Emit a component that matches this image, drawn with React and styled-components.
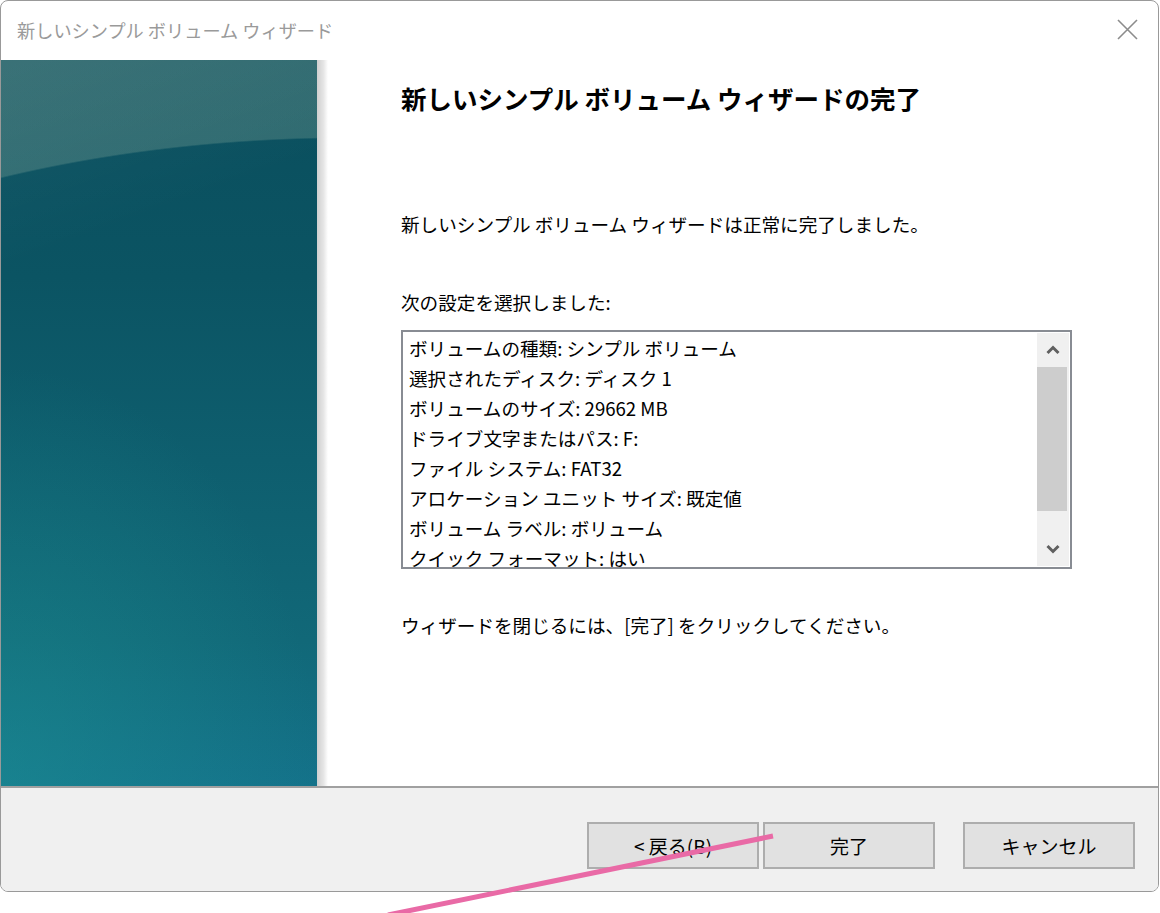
import styled, { createGlobalStyle } from "styled-components";

// style

const GlobalStyle = createGlobalStyle`
html, body {
    margin: 0;
    padding: 0;
    background: #fff;
}
body {
    font-family: "Noto Sans CJK JP", "Noto Sans", sans-serif;
    color: #000;
}
`

const Page = styled.div`
position: relative;
width: 1160px;
height: 913px;
overflow: hidden;
`

const Window = styled.div`
width: 1159px;
height: 892px;
box-sizing: border-box;
border: 1px solid #999;
border-radius: 8px;
background: #fff;
display: flex;
flex-direction: column;
overflow: hidden;
`

const TitleBar = styled.div`
height: 59px;
flex: none;
display: flex;
align-items: center;
justify-content: space-between;
padding: 0 20px 0 16px;
`

const TitleText = styled.span`
font-size: 18.2px;
color: #9a9a9a;
margin-top: -2px;
`

const CloseBtn = styled.div`
width: 22px;
height: 22px;
display: flex;
align-items: center;
justify-content: center;
margin-top: -2px;
`

const Body = styled.div`
flex: 1;
display: flex;
min-height: 0;
`

const SidePanel = styled.div`
width: 316px;
flex: none;
background:
    linear-gradient(160deg, rgba(255, 255, 255, 0.05) 0, rgba(255, 255, 255, 0) 200px),
    radial-gradient(ellipse 800px 396px at 350px 473px, rgba(0, 0, 0, 0) 99.6%, rgba(120, 160, 148, 0.34) 100%),
    radial-gradient(ellipse 320px 420px at 0% 100%, rgba(30, 150, 150, 0.45), rgba(30, 150, 150, 0)),
    linear-gradient(to bottom, #0a4e5d 0%, #0b5463 30%, #0e5e6e 55%, #116878 80%, #14728a 100%);
`

const PanelShadow = styled.div`
width: 11px;
flex: none;
background: linear-gradient(to right, #cfcfcf, #e6e6e6 60%, #fff);
`

const Content = styled.div`
flex: 1;
padding: 20px 86px 0 73px;
display: flex;
flex-direction: column;
`

const Heading = styled.h1`
margin: 0;
font-size: 25.5px;
line-height: 36px;
font-weight: 700;
`

const Text = styled.p`
margin: ${p => p.$top || 0}px 0 0 0;
font-size: 18.6px;
line-height: 28px;
`

const ListBox = styled.div`
margin-top: 14px;
height: 239px;
box-sizing: border-box;
border: 2px solid #888c93;
display: flex;
overflow: hidden;
`

const Lines = styled.ul`
flex: 1;
list-style: none;
margin: 0;
padding: 1px 0 0 6px;
overflow: hidden;
`

const Line = styled.li`
font-size: 18.6px;
line-height: 30px;
white-space: nowrap;
`

const ScrollBar = styled.div`
width: 32px;
margin: 1px 1px 1px 0;
background: #f0f0f0;
display: flex;
flex-direction: column;
`

const ScrollArrow = styled.div`
height: 34px;
flex: none;
display: flex;
align-items: center;
justify-content: center;
`

const Thumb = styled.div`
height: 144px;
margin-right: 2px;
background: #cdcdcd;
`

const ScrollTrack = styled.div`
flex: 1;
`

const Footer = styled.div`
height: 105px;
flex: none;
box-sizing: border-box;
border-top: 2px solid #a0a0a0;
background: #f0f0f0;
display: flex;
justify-content: flex-end;
padding: 34px 23px 0 0;
`

const Button = styled.button`
width: 172px;
height: 47px;
box-sizing: border-box;
border: 2px solid #adadad;
background: #e1e1e1;
font-family: "Noto Sans CJK JP", "Noto Sans", sans-serif;
font-size: 19px;
color: #000;
padding: 0;
margin-left: ${p => p.$gap || 0}px;
`

const Annotation = styled.svg`
position: absolute;
inset: 0;
pointer-events: none;
`

//

const settings = [
    "ボリュームの種類: シンプル ボリューム",
    "選択されたディスク: ディスク 1",
    "ボリュームのサイズ: 29662 MB",
    "ドライブ文字またはパス: F:",
    "ファイル システム: FAT32",
    "アロケーション ユニット サイズ: 既定値",
    "ボリューム ラベル: ボリューム",
    "クイック フォーマット: はい",
]

const Chevron = ({ down }) => (
    <svg width="14" height="10" viewBox="0 0 14 10">
        <path
            d={down ? "M1.5 2 L7 7.5 L12.5 2" : "M1.5 8 L7 2.5 L12.5 8"}
            fill="none"
            stroke="#606060"
            strokeWidth="3"
        />
    </svg>
)

const App = () => {
    return (
        <Page>
            <GlobalStyle />
            <Window>
                <TitleBar>
                    <TitleText>新しいシンプル ボリューム ウィザード</TitleText>
                    <CloseBtn>
                        <svg width="21" height="21" viewBox="0 0 21 21">
                            <path d="M1 1 L20 20 M20 1 L1 20" stroke="#8c8c8c" strokeWidth="1.6" />
                        </svg>
                    </CloseBtn>
                </TitleBar>
                <Body>
                    <SidePanel />
                    <PanelShadow />
                    <Content>
                        <Heading>新しいシンプル ボリューム ウィザードの完了</Heading>
                        <Text $top={94}>新しいシンプル ボリューム ウィザードは正常に完了しました。</Text>
                        <Text $top={50}>次の設定を選択しました:</Text>
                        <ListBox>
                            <Lines>
                                {settings.map(it => <Line key={it}>{it}</Line>)}
                            </Lines>
                            <ScrollBar>
                                <ScrollArrow><Chevron /></ScrollArrow>
                                <Thumb />
                                <ScrollTrack />
                                <ScrollArrow><Chevron down /></ScrollArrow>
                            </ScrollBar>
                        </ListBox>
                        <Text $top={42}>ウィザードを閉じるには、[完了] をクリックしてください。</Text>
                    </Content>
                </Body>
                <Footer>
                    <Button>&lt; 戻る(B)</Button>
                    <Button $gap={4}>完了</Button>
                    <Button $gap={28}>キャンセル</Button>
                </Footer>
            </Window>
            <Annotation width="1160" height="913" viewBox="0 0 1160 913">
                <line x1="773" y1="836" x2="388" y2="915" stroke="#e96aa6" strokeWidth="5" />
            </Annotation>
        </Page>
    )
}

export default App
